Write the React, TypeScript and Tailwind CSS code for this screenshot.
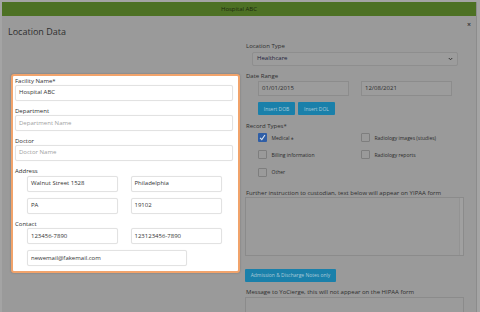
import React from "react";

const font = { fontFamily: '"Open Sans", "Liberation Sans", sans-serif' };

function BoxInput({ value, placeholder, className }: { value?: string; placeholder?: string; className: string }) {
  return (
    <div
      className={`flex h-[16px] items-center rounded-[2px] border border-[#e2e2e2] bg-white pl-[3px] text-[6px] leading-[7px] shadow-[0_0_1px_rgba(0,0,0,0.08)] ${className}`}
    >
      {value ? <span className="text-[#333]">{value}</span> : <span className="text-[#a0a0a0]">{placeholder}</span>}
    </div>
  );
}

function Label({ children, className = "" }: { children: React.ReactNode; className?: string }) {
  return <div className={`text-[6px] leading-[7px] text-[#2e2e2e] ${className}`}>{children}</div>;
}

function Check({ checked, label }: { checked?: boolean; label: string }) {
  return (
    <div className="flex h-[9px] items-center gap-[4.5px]">
      {checked ? (
        <div className="flex h-[9px] w-[9px] items-center justify-center rounded-[1px] bg-[#2f5ea6]">
          <svg width="7" height="7" viewBox="0 0 10 10">
            <path d="M1.5 5.5 L4 8 L8.5 1.5" fill="none" stroke="#d8e2ee" strokeWidth="1.6" />
          </svg>
        </div>
      ) : (
        <div className="h-[9px] w-[9px] rounded-[1px] border border-[#7e7e7e]" />
      )}
      <span className="text-[5px] leading-[6px] text-[#2a2a2a]">{label}</span>
    </div>
  );
}

function Blue({ children, className }: { children: React.ReactNode; className: string }) {
  return (
    <div
      className={`flex items-center justify-center rounded-[1px] bg-[#1a80aa] text-[5px] leading-[6px] text-[#aacbd9] ${className}`}
    >
      {children}
    </div>
  );
}

export default function App() {
  return (
    <div className="h-[312px] w-[480px] overflow-hidden bg-[#a4a4a4] pl-[2px] pt-[2px]" style={font}>
      <div className="relative h-[310px] w-[475px] border-r border-[#8c8c8c] bg-[#9a9a9a]">
        {/* header */}
        <div className="flex h-[14px] items-center justify-center bg-[#4d7124] text-[6px] text-[#1c2a0c]">
          Hospital ABC
        </div>
        <div className="absolute left-[465px] top-[19px] text-[7px] font-bold leading-[8px] text-[#3a3a3a]">×</div>

        <div className="pl-[6px] pt-[10px] text-[9px] leading-[12px] text-[#2e2e2e]">Location Data</div>

        <div className="flex gap-[5px] pl-[9px]">
          {/* left, highlighted */}
          <div className="mt-[36px] w-[229px] shrink-0">
            <div className="rounded-[3px] border-2 border-[#f1a36b] bg-white pb-[5px] pl-[1px] pt-[1.5px] shadow-[0_0_2px_rgba(0,0,0,0.25)]">
              <Label className="pl-[1px]">Facility Name*</Label>
              <BoxInput className="ml-[1px] w-[218px]" value="Hospital ABC" />
              <Label className="mt-[7.5px] pl-[1px]">Department</Label>
              <BoxInput className="ml-[1px] w-[218px]" placeholder="Department Name" />
              <Label className="mt-[6.5px] pl-[1px]">Doctor</Label>
              <BoxInput className="ml-[1px] w-[218px]" placeholder="Doctor Name" />
              <Label className="mt-[7px] pl-[1px]">Address</Label>
              <div className="mt-[1px] flex gap-[12.5px] pl-[13px]">
                <BoxInput className="w-[91px]" value="Walnut Street 1528" />
                <BoxInput className="w-[91px]" value="Philadelphia" />
              </div>
              <div className="mt-[6px] flex gap-[12.5px] pl-[13px]">
                <BoxInput className="w-[91px]" value="PA" />
                <BoxInput className="w-[91px]" value="19102" />
              </div>
              <Label className="mt-[7.5px] pl-[1px]">Contact</Label>
              <div className="flex gap-[12.5px] pl-[13px]">
                <BoxInput className="w-[91px]" value="123456-7890" />
                <BoxInput className="w-[91px]" value="123123456-7890" />
              </div>
              <div className="mt-[6px] pl-[13px]">
                <BoxInput className="w-[160px]" value="newemail@fakemail.com" />
              </div>
            </div>
          </div>

          {/* right */}
          <div className="w-[220px] shrink-0 pt-[4.5px]">
            <Label className="pl-[1px]">Location Type</Label>
            <div className="ml-[7px] mt-[2px] flex h-[14px] w-[206px] items-center justify-between rounded-[2px] border border-[#8e8e8e] bg-[#9c9c9c] pl-[4px] pr-[4px]">
              <span className="text-[6px] leading-[7px] text-[#1d1d3a]">Healthcare</span>
              <svg width="5" height="4" viewBox="0 0 10 8">
                <path d="M1.5 2 L5 5.5 L8.5 2" fill="none" stroke="#333" strokeWidth="2" />
              </svg>
            </div>

            <Label className="mt-[7px] pl-[1px]">Date Range</Label>
            <div className="mt-[1.5px] flex gap-[12px] pl-[13px]">
              <div className="flex h-[15px] w-[91px] items-center border border-[#8c8c8c] bg-[#9c9c9c] pl-[3px] text-[6px] text-[#2c2c2c]">
                01/01/2015
              </div>
              <div className="flex h-[15px] w-[91px] items-center border border-[#8c8c8c] bg-[#9c9c9c] pl-[3px] text-[6px] text-[#2c2c2c]">
                12/08/2021
              </div>
            </div>
            <div className="mt-[6px] flex gap-[3px] pl-[13px]">
              <Blue className="h-[13px] w-[37px]">Insert DOB</Blue>
              <Blue className="h-[13px] w-[37px]">Insert DOL</Blue>
            </div>

            <Label className="mt-[8px] pl-[1px]">Record Types*</Label>
            <div className="mt-[3px] grid grid-cols-[103px_1fr] gap-y-[8.3px] pl-[13px]">
              <Check checked label="Medical ±" />
              <Check label="Radiology images (studies)" />
              <Check label="Billing information" />
              <Check label="Radiology reports" />
              <Check label="Other" />
            </div>

            <Label className="mt-[13px] pl-[1px]">Further instruction to custodian, text below will appear on YIPAA form</Label>
            <div className="mt-[0.5px] flex h-[59px] w-[219px] justify-end border border-[#8b8b8b] bg-[#9b9b9b]">
              <div className="w-[4px] border-l border-[#939393] bg-[#a0a0a0]" />
            </div>

            <Blue className="mt-[12.5px] h-[13.5px] w-[91px]">Admission &amp; Discharge Notes only</Blue>

            <Label className="mt-[6.5px] pl-[1px]">Message to YoCierge, this will not appear on the HIPAA form</Label>
            <div className="mt-[1px] h-[40px] w-[219px] border border-[#8b8b8b] bg-[#9b9b9b]" />
          </div>
        </div>
      </div>
    </div>
  );
}
